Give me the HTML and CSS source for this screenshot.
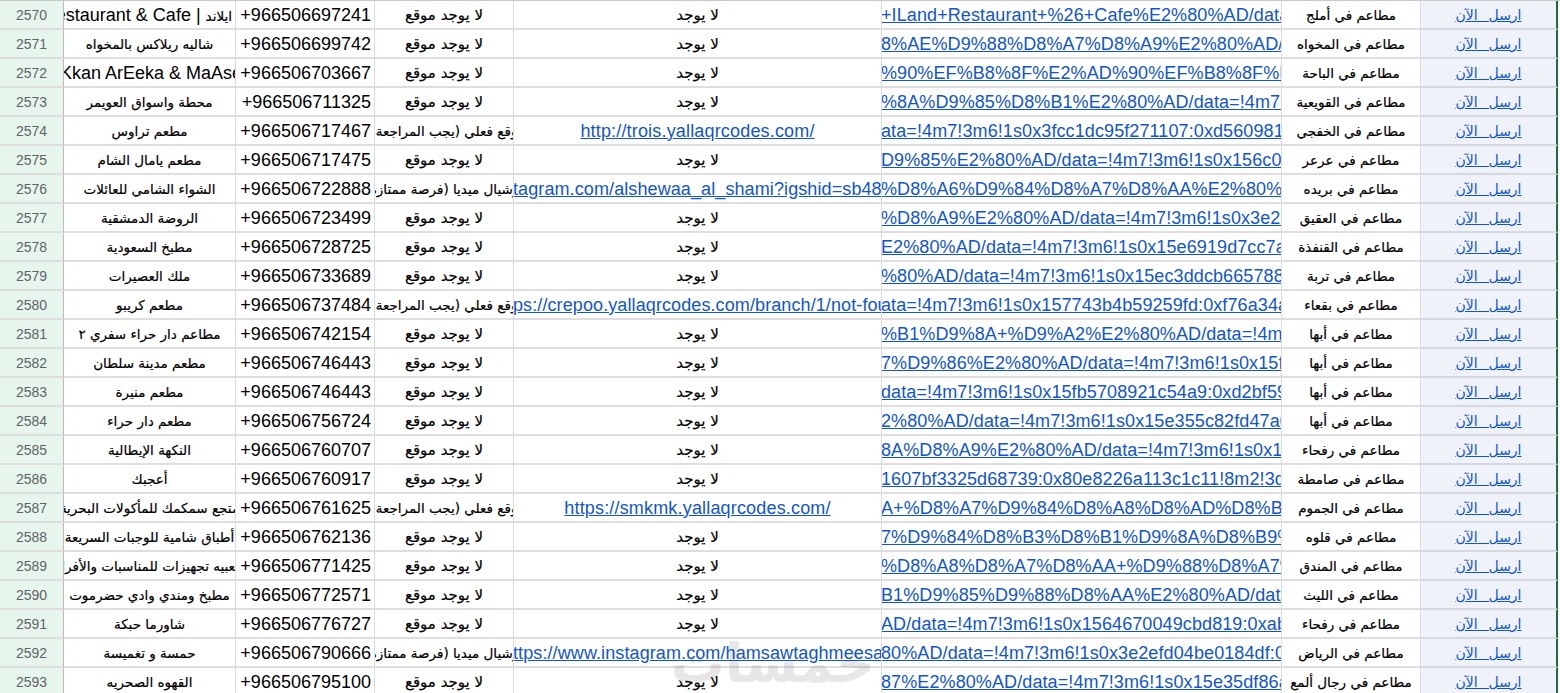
FILE: index.html
```html
<!DOCTYPE html>
<html lang="ar">
<head>
<meta charset="utf-8">
<title>Sheet</title>
<link rel="stylesheet" href="styles.css">
</head>
<body>
<main class="sheet">
<div class="row"><div class="c num">2570</div><div class="c name end"><span dir="ltr">Restaurant &amp; Cafe | <span class="ar">ايلاند</span></span></div><div class="c phone">+966506697241</div><div class="c ar lg" dir="rtl">لا يوجد موقع</div><div class="c ar lg">لا يوجد</div><div class="c url"><a>+ILand+Restaurant+%26+Cafe%E2%80%AD/data=!4m7</a></div><div class="c ar">مطاعم في أملج</div><div class="c send"><a>ارسل&nbsp; الآن</a></div></div>
<div class="row"><div class="c num">2571</div><div class="c ar">شاليه ريلاكس بالمخواه</div><div class="c phone">+966506699742</div><div class="c ar lg" dir="rtl">لا يوجد موقع</div><div class="c ar lg">لا يوجد</div><div class="c url"><a>8%AE%D9%88%D8%A7%D8%A9%E2%80%AD/data=!4m7</a></div><div class="c ar">مطاعم في المخواه</div><div class="c send"><a>ارسل&nbsp; الآن</a></div></div>
<div class="row"><div class="c num">2572</div><div class="c name start"><span>Kkan ArEeka &amp; MaAsek</span></div><div class="c phone">+966506703667</div><div class="c ar lg" dir="rtl">لا يوجد موقع</div><div class="c ar lg">لا يوجد</div><div class="c url"><a>%90%EF%B8%8F%E2%AD%90%EF%B8%8F%E2%AD%90%EF%B8</a></div><div class="c ar">مطاعم في الباحة</div><div class="c send"><a>ارسل&nbsp; الآن</a></div></div>
<div class="row"><div class="c num">2573</div><div class="c ar">محطة واسواق العويمر</div><div class="c phone">+966506711325</div><div class="c ar lg" dir="rtl">لا يوجد موقع</div><div class="c ar lg">لا يوجد</div><div class="c url"><a>%8A%D9%85%D8%B1%E2%80%AD/data=!4m7!3m6!1s0x</a></div><div class="c ar">مطاعم في القويعية</div><div class="c send"><a>ارسل&nbsp; الآن</a></div></div>
<div class="row"><div class="c num">2574</div><div class="c ar">مطعم تراوس</div><div class="c phone">+966506717467</div><div class="c ar long" dir="rtl">لا يوجد موقع فعلي (يجب المراجعة)</div><div class="c link"><a>http://trois.yallaqrcodes.com/</a></div><div class="c url"><a>ata=!4m7!3m6!1s0x3fcc1dc95f271107:0xd56098123</a></div><div class="c ar">مطاعم في الخفجي</div><div class="c send"><a>ارسل&nbsp; الآن</a></div></div>
<div class="row"><div class="c num">2575</div><div class="c ar">مطعم يامال الشام</div><div class="c phone">+966506717475</div><div class="c ar lg" dir="rtl">لا يوجد موقع</div><div class="c ar lg">لا يوجد</div><div class="c url"><a>D9%85%E2%80%AD/data=!4m7!3m6!1s0x156c0abc123</a></div><div class="c ar">مطاعم في عرعر</div><div class="c send"><a>ارسل&nbsp; الآن</a></div></div>
<div class="row"><div class="c num">2576</div><div class="c ar">الشواء الشامي للعائلات</div><div class="c phone">+966506722888</div><div class="c ar long" dir="rtl">لا يوجد سوشيال ميديا (فرصة ممتازة)</div><div class="c url"><a>tagram.com/alshewaa_al_shami?igshid=sb4873abcdef</a></div><div class="c url"><a>%D8%A6%D9%84%D8%A7%D8%AA%E2%80%AD/data=!4m7</a></div><div class="c ar">مطاعم في بريده</div><div class="c send"><a>ارسل&nbsp; الآن</a></div></div>
<div class="row"><div class="c num">2577</div><div class="c ar">الروضة الدمشقية</div><div class="c phone">+966506723499</div><div class="c ar lg" dir="rtl">لا يوجد موقع</div><div class="c ar lg">لا يوجد</div><div class="c url"><a>%D8%A9%E2%80%AD/data=!4m7!3m6!1s0x3e2abc12345</a></div><div class="c ar">مطاعم في العقيق</div><div class="c send"><a>ارسل&nbsp; الآن</a></div></div>
<div class="row"><div class="c num">2578</div><div class="c ar">مطبخ السعودية</div><div class="c phone">+966506728725</div><div class="c ar lg" dir="rtl">لا يوجد موقع</div><div class="c ar lg">لا يوجد</div><div class="c url"><a>E2%80%AD/data=!4m7!3m6!1s0x15e6919d7cc7abc</a></div><div class="c ar">مطاعم في القنفذة</div><div class="c send"><a>ارسل&nbsp; الآن</a></div></div>
<div class="row"><div class="c num">2579</div><div class="c ar">ملك العصيرات</div><div class="c phone">+966506733689</div><div class="c ar lg" dir="rtl">لا يوجد موقع</div><div class="c ar lg">لا يوجد</div><div class="c url"><a>%80%AD/data=!4m7!3m6!1s0x15ec3ddcb665788abc</a></div><div class="c ar">مطاعم في تربة</div><div class="c send"><a>ارسل&nbsp; الآن</a></div></div>
<div class="row"><div class="c num">2580</div><div class="c ar">مطعم كريبو</div><div class="c phone">+966506737484</div><div class="c ar long" dir="rtl">لا يوجد موقع فعلي (يجب المراجعة)</div><div class="c url"><a>ps://crepoo.yallaqrcodes.com/branch/1/not-found/abc</a></div><div class="c url"><a>ata=!4m7!3m6!1s0x157743b4b59259fd:0xf76a34abc</a></div><div class="c ar">مطاعم في بقعاء</div><div class="c send"><a>ارسل&nbsp; الآن</a></div></div>
<div class="row"><div class="c num">2581</div><div class="c ar">مطاعم دار حراء سفري ٢</div><div class="c phone">+966506742154</div><div class="c ar lg" dir="rtl">لا يوجد موقع</div><div class="c ar lg">لا يوجد</div><div class="c url"><a>%B1%D9%8A+%D9%A2%E2%80%AD/data=!4m7!3m6</a></div><div class="c ar">مطاعم في أبها</div><div class="c send"><a>ارسل&nbsp; الآن</a></div></div>
<div class="row"><div class="c num">2582</div><div class="c ar">مطعم مدينة سلطان</div><div class="c phone">+966506746443</div><div class="c ar lg" dir="rtl">لا يوجد موقع</div><div class="c ar lg">لا يوجد</div><div class="c url"><a>7%D9%86%E2%80%AD/data=!4m7!3m6!1s0x15fabc123</a></div><div class="c ar">مطاعم في أبها</div><div class="c send"><a>ارسل&nbsp; الآن</a></div></div>
<div class="row"><div class="c num">2583</div><div class="c ar">مطعم منيرة</div><div class="c phone">+966506746443</div><div class="c ar lg" dir="rtl">لا يوجد موقع</div><div class="c ar lg">لا يوجد</div><div class="c url"><a>data=!4m7!3m6!1s0x15fb5708921c54a9:0xd2bf59abc</a></div><div class="c ar">مطاعم في أبها</div><div class="c send"><a>ارسل&nbsp; الآن</a></div></div>
<div class="row"><div class="c num">2584</div><div class="c ar">مطعم دار حراء</div><div class="c phone">+966506756724</div><div class="c ar lg" dir="rtl">لا يوجد موقع</div><div class="c ar lg">لا يوجد</div><div class="c url"><a>2%80%AD/data=!4m7!3m6!1s0x15e355c82fd47a0abc</a></div><div class="c ar">مطاعم في أبها</div><div class="c send"><a>ارسل&nbsp; الآن</a></div></div>
<div class="row"><div class="c num">2585</div><div class="c ar">النكهة الإيطالية</div><div class="c phone">+966506760707</div><div class="c ar lg" dir="rtl">لا يوجد موقع</div><div class="c ar lg">لا يوجد</div><div class="c url"><a>8A%D8%A9%E2%80%AD/data=!4m7!3m6!1s0x1abc1234</a></div><div class="c ar">مطاعم في رفحاء</div><div class="c send"><a>ارسل&nbsp; الآن</a></div></div>
<div class="row"><div class="c num">2586</div><div class="c ar">أعجبك</div><div class="c phone">+966506760917</div><div class="c ar lg" dir="rtl">لا يوجد موقع</div><div class="c ar lg">لا يوجد</div><div class="c url"><a>1607bf3325d68739:0x80e8226a113c1c11!8m2!3d2abc</a></div><div class="c ar">مطاعم في صامطة</div><div class="c send"><a>ارسل&nbsp; الآن</a></div></div>
<div class="row"><div class="c num">2587</div><div class="c ar">متجع سمكمك للمأكولات البحرية</div><div class="c phone">+966506761625</div><div class="c ar long" dir="rtl">لا يوجد موقع فعلي (يجب المراجعة)</div><div class="c link"><a>https://smkmk.yallaqrcodes.com/</a></div><div class="c url"><a>A+%D8%A7%D9%84%D8%A8%D8%AD%D8%B1%D9%8A%D8%A9</a></div><div class="c ar">مطاعم في الجموم</div><div class="c send"><a>ارسل&nbsp; الآن</a></div></div>
<div class="row"><div class="c num">2588</div><div class="c ar">أطباق شامية للوجبات السريعة</div><div class="c phone">+966506762136</div><div class="c ar lg" dir="rtl">لا يوجد موقع</div><div class="c ar lg">لا يوجد</div><div class="c url"><a>7%D9%84%D8%B3%D8%B1%D9%8A%D8%B9%D8%A9%E2%80%AD</a></div><div class="c ar">مطاعم في قلوه</div><div class="c send"><a>ارسل&nbsp; الآن</a></div></div>
<div class="row"><div class="c num">2589</div><div class="c ar">شعبيه تجهيزات للمناسبات والأفراح</div><div class="c phone">+966506771425</div><div class="c ar lg" dir="rtl">لا يوجد موقع</div><div class="c ar lg">لا يوجد</div><div class="c url"><a>%D8%A8%D8%A7%D8%AA+%D9%88%D8%A7%D9%84%D8%A3</a></div><div class="c ar">مطاعم في المندق</div><div class="c send"><a>ارسل&nbsp; الآن</a></div></div>
<div class="row"><div class="c num">2590</div><div class="c ar">مطبخ ومندي وادي حضرموت</div><div class="c phone">+966506772571</div><div class="c ar lg" dir="rtl">لا يوجد موقع</div><div class="c ar lg">لا يوجد</div><div class="c url"><a>B1%D9%85%D9%88%D8%AA%E2%80%AD/data=!4m7!3m6</a></div><div class="c ar">مطاعم في الليث</div><div class="c send"><a>ارسل&nbsp; الآن</a></div></div>
<div class="row"><div class="c num">2591</div><div class="c ar">شاورما حبكة</div><div class="c phone">+966506776727</div><div class="c ar lg" dir="rtl">لا يوجد موقع</div><div class="c ar lg">لا يوجد</div><div class="c url"><a>AD/data=!4m7!3m6!1s0x1564670049cbd819:0xabc123</a></div><div class="c ar">مطاعم في رفحاء</div><div class="c send"><a>ارسل&nbsp; الآن</a></div></div>
<div class="row"><div class="c num">2592</div><div class="c ar">حمسة و تغميسة</div><div class="c phone">+966506790666</div><div class="c ar long" dir="rtl">لا يوجد سوشيال ميديا (فرصة ممتازة)</div><div class="c url"><a>ttps://www.instagram.com/hamsawtaghmeesah/abc</a></div><div class="c url"><a>80%AD/data=!4m7!3m6!1s0x3e2efd04be0184df:0xabc</a></div><div class="c ar">مطاعم في الرياض</div><div class="c send"><a>ارسل&nbsp; الآن</a></div></div>
<div class="row"><div class="c num">2593</div><div class="c ar">القهوه الصحريه</div><div class="c phone">+966506795100</div><div class="c ar lg" dir="rtl">لا يوجد موقع</div><div class="c ar lg">لا يوجد</div><div class="c url"><a>87%E2%80%AD/data=!4m7!3m6!1s0x15e35df86abc123</a></div><div class="c ar">مطاعم في رجال ألمع</div><div class="c send"><a>ارسل&nbsp; الآن</a></div></div>
</main>
<div class="mark" dir="rtl">خمسات</div>
</body>
</html>
```

FILE: styles.css
```css
html, body {
  margin: 0;
  height: 100%;
  overflow: hidden;
  background: #fff;
}
body {
  position: relative;
  font-family: "Liberation Sans", "DejaVu Sans", sans-serif;
  font-size: 18px;
  color: #000;
}
.sheet {
  border-top: 1px solid #c8c8c8;
}
.row {
  display: grid;
  grid-template-columns: 64px 172px 139px 139px 368px 400px 139px 139px;
  height: 29px;
  width: 1560px;
  box-sizing: border-box;
}
.c {
  display: flex;
  align-items: center;
  justify-content: center;
  min-width: 0;
  overflow: hidden;
  white-space: nowrap;
  box-sizing: border-box;
  border-right: 1px solid #dcdcdc;
  border-bottom: 2px solid #dedede;
  padding-top: 1px;
}
.num {
  background: #e7f6ec;
  border-right-color: #bdbdbd;
  color: #5f6368;
  font-size: 14px;
  padding-top: 0;
}
.ar {
  font-family: "DejaVu Sans", sans-serif;
  font-size: 13.5px;
  -webkit-text-stroke: 0.2px #000;
}
.lg {
  font-size: 15px;
}
.long {
  padding-left: 50px;
}
.name span {
  flex: none;
}
.end {
  justify-content: flex-end;
  padding-right: 3px;
}
.start {
  justify-content: flex-start;
}
.start span {
  margin-left: -4px;
}
.phone {
  justify-content: flex-end;
  padding-right: 3px;
}
.c a {
  color: #1155cc;
  text-decoration: underline;
  flex: none;
}
.link a {
  letter-spacing: 0.17px;
}
.url {
  justify-content: flex-start;
}
.url a {
  margin-left: -1px;
  letter-spacing: 0.1px;
}
.send {
  background: #eff2f8;
  border-right: 2px solid #1e6b3e;
  margin-right: 2px;
  border-bottom-color: #d5d8de;
  font-family: "DejaVu Sans", sans-serif;
  font-size: 14px;
  word-spacing: 1px;
}
.send a {
  color: #1155cc;
}
.mark {
  position: absolute;
  left: 685px;
  top: 632px;
  width: 190px;
  font-family: "DejaVu Sans", sans-serif;
  font-size: 54px;
  font-weight: 700;
  color: #000;
  opacity: 0.09;
  text-align: center;
  pointer-events: none;
  white-space: nowrap;
}
```
